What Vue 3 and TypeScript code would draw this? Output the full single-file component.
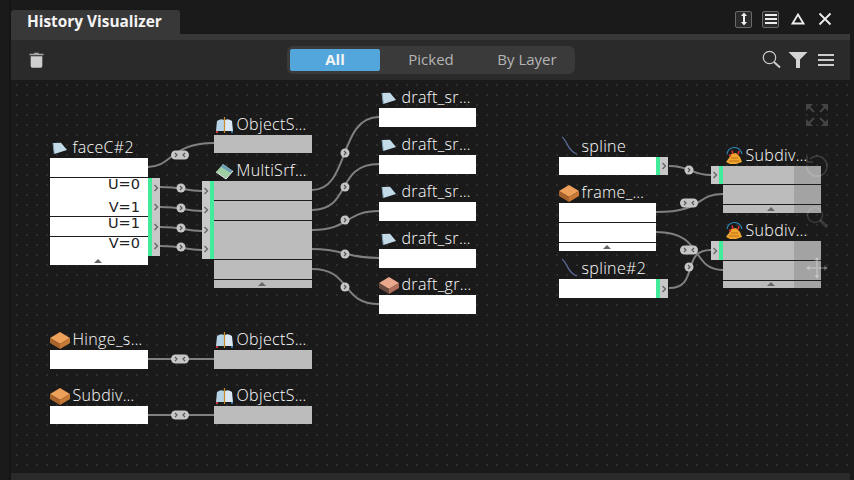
<script setup lang="ts">
interface GraphNode {
  id: string; title: string; icon: string; x: number; y: number; w: number; h: number;
  body: 'white' | 'gray' | 'split'; rows: number[]; tri?: boolean;
  outPort?: [number, number, number]; inPort?: [number, number, number];
}
// rows = separator offsets from the top of the body; ports = [top, height, count]
const nodes: GraphNode[] = [
  { id: 'a', title: 'faceC#2', icon: 'face', x: 50, y: 158, w: 98, h: 107, body: 'white', rows: [19, 58, 78], tri: true, outPort: [20, 78, 4] },
  { id: 'b', title: 'ObjectS…', icon: 'obj', x: 214, y: 135, w: 98, h: 18, body: 'gray', rows: [] },
  { id: 'c', title: 'MultiSrf…', icon: 'multi', x: 214, y: 181, w: 98, h: 107, body: 'gray', rows: [19, 39, 78, 98], tri: true, inPort: [0, 78, 4] },
  { id: 'd1', title: 'draft_sr…', icon: 'face', x: 379, y: 108, w: 97, h: 19, body: 'white', rows: [] },
  { id: 'd2', title: 'draft_sr…', icon: 'face', x: 379, y: 155, w: 97, h: 19, body: 'white', rows: [] },
  { id: 'd3', title: 'draft_sr…', icon: 'face', x: 379, y: 202, w: 97, h: 19, body: 'white', rows: [] },
  { id: 'd4', title: 'draft_sr…', icon: 'face', x: 379, y: 249, w: 97, h: 19, body: 'white', rows: [] },
  { id: 'd5', title: 'draft_gr…', icon: 'pink', x: 379, y: 295, w: 97, h: 19, body: 'white', rows: [] },
  { id: 'e', title: 'spline', icon: 'curve', x: 559, y: 157, w: 97, h: 18, body: 'white', rows: [], outPort: [0, 18, 1] },
  { id: 'f', title: 'frame_…', icon: 'cube', x: 559, y: 203, w: 97, h: 48, body: 'white', rows: [19, 39], tri: true },
  { id: 'g', title: 'spline#2', icon: 'curve', x: 559, y: 279, w: 97, h: 19, body: 'white', rows: [], outPort: [0, 19, 1] },
  { id: 'h', title: 'Subdiv…', icon: 'sub', x: 723, y: 166, w: 98, h: 47, body: 'split', rows: [18, 38], tri: true, inPort: [0, 18, 1] },
  { id: 'i', title: 'Subdiv…', icon: 'sub', x: 723, y: 241, w: 98, h: 47, body: 'split', rows: [19, 39], tri: true, inPort: [0, 19, 1] },
  { id: 'j', title: 'Hinge_s…', icon: 'cube', x: 50, y: 350, w: 98, h: 19, body: 'white', rows: [] },
  { id: 'k', title: 'ObjectS…', icon: 'obj', x: 214, y: 350, w: 98, h: 19, body: 'gray', rows: [] },
  { id: 'l', title: 'Subdiv…', icon: 'cube', x: 50, y: 406, w: 98, h: 18, body: 'white', rows: [] },
  { id: 'm', title: 'ObjectS…', icon: 'obj', x: 214, y: 406, w: 98, h: 18, body: 'gray', rows: [] },
]

const rowLabels = [
  { t: 'U=0', y: 184 }, { t: 'V=1', y: 207 }, { t: 'U=1', y: 223 }, { t: 'V=0', y: 243 },
]
const wires = [
  'M148 167C172 167 170 143 214 143',
  'M160 187C184 187 184 191 202 191', 'M160 207C184 207 184 211 202 211',
  'M160 227C184 227 184 231 202 231', 'M160 246C184 246 184 250 202 250',
  'M312 190C350 190 338 117 379 117', 'M312 210C352 210 335 164 379 164',
  'M312 230C350 230 345 211 379 211', 'M312 249C345 249 345 258 379 258',
  'M312 269C352 269 340 304 379 304',
  'M669 166C692 166 690 175 711 175', 'M656 212C705 212 695 194 723 194',
  'M656 232C705 232 690 270 723 270', 'M669 288C700 288 680 250 711 250',
  'M148 359L214 359', 'M148 415L214 415',
]
const singles = [
  [181, 188], [181, 208], [181, 228], [181, 247],
  [345, 153], [345, 187], [345, 220], [345, 254], [345, 287],
  [689, 170], [689, 267],
]
const doubles = [[180, 155], [689, 203], [689, 250], [180, 359], [180, 415]]
</script>

<template>
  <div class="app">
    <div class="panel">
      <header class="titlebar">
        <div class="tab">History Visualizer</div>
        <div class="win-actions">
          <button class="win-btn boxed" aria-label="Fit">
            <svg width="12" height="14" viewBox="0 0 12 14"><path d="M6 0.5 9 4H7V10H9L6 13.5 3 10H5V4H3Z" fill="#eee"/></svg>
          </button>
          <button class="win-btn boxed" aria-label="List">
            <svg width="14" height="12" viewBox="0 0 14 12"><path d="M1 2H13M1 6H13M1 10H13" stroke="#eee" stroke-width="2"/></svg>
          </button>
          <button class="win-btn" aria-label="Collapse">
            <svg width="14" height="12" viewBox="0 0 14 12"><path d="M7 1.5 12.5 10.5H1.5Z" fill="none" stroke="#eee" stroke-width="1.8"/></svg>
          </button>
          <button class="win-btn" aria-label="Close">
            <svg width="14" height="14" viewBox="0 0 14 14"><path d="M1.5 1.5 12.5 12.5M12.5 1.5 1.5 12.5" stroke="#eee" stroke-width="1.8"/></svg>
          </button>
        </div>
      </header>
      <div class="strip"></div>
      <div class="toolbar">
        <svg class="trash" width="15" height="18" viewBox="0 0 16 18">
          <path d="M5.5 2.2V1.2H10.5V2.2H15.5V4H.5V2.2Z" fill="#a8a8a8"/>
          <path d="M1.8 5H14.2V15.5Q14.2 17.2 12.5 17.2H3.5Q1.8 17.2 1.8 15.5Z" fill="#cfcfcf"/>
        </svg>
        <div class="segments">
          <span class="seg active">All</span>
          <span class="seg">Picked</span>
          <span class="seg">By Layer</span>
        </div>
        <div class="tools">
          <svg width="20" height="20" viewBox="0 0 20 20"><circle cx="7.5" cy="7.5" r="6.2" fill="none" stroke="#ccc" stroke-width="1.2"/><path d="M12 12 18 17.5" stroke="#ccc" stroke-width="2"/></svg>
          <svg class="funnel" width="20" height="18" viewBox="0 0 20 18"><path d="M0.5 1H19.5L12 8.5V17H8V8.5Z" fill="#d4d4d4"/></svg>
          <svg width="16" height="14" viewBox="0 0 16 14"><path d="M0 2H16M0 7H16M0 12H16" stroke="#ccc" stroke-width="2"/></svg>
        </div>
      </div>
      <main class="canvas">
        <svg class="wires" width="854" height="480" viewBox="0 0 854 480">
          <path v-for="(d, i) in wires" :key="i" :d="d" fill="none" stroke="#808080" stroke-width="2"/>
          <g v-for="(p, i) in singles" :key="'s' + i" :transform="`translate(${p[0]} ${p[1]})`">
            <circle r="4.5" fill="#c6c6c6"/>
            <path d="M-1 -2 1 0 -1 2" fill="none" stroke="#555" stroke-width="1.2"/>
          </g>
          <g v-for="(p, i) in doubles" :key="'d' + i" :transform="`translate(${p[0]} ${p[1]})`">
            <rect x="-9" y="-4.5" width="18" height="9" rx="4.5" fill="#c6c6c6"/>
            <path d="M-5 -2 -3 0 -5 2M5 -2 3 0 5 2" fill="none" stroke="#555" stroke-width="1.2"/>
          </g>
        </svg>

        <article v-for="n in nodes" :key="n.id" class="node" :style="{ left: n.x - 11 + 'px', top: n.y - 80 + 'px', width: n.w + 'px', height: n.h + 'px' }">
          <div class="node-title">
            <svg class="icon" width="22" height="22" viewBox="0 0 22 22">
              <template v-if="n.icon === 'face'">
                <path d="M3 7 11 6.700 17 14 4.300 18Z" fill="#c3dbe9"/><path d="M3 7 4.300 18" stroke="#7fa0b6" stroke-width="1"/>
              </template>
              <template v-else-if="n.icon === 'obj'">
                <path d="M3 8Q7 5 10 7V18H2Z" fill="#b5d2e6"/><path d="M11 7Q14 5 18 8L19 18H11Z" fill="#d9e8f2"/>
                <path d="M10.5 4V20" stroke="#c98a2c" stroke-width="1.2"/>
                <rect x="2" y="18" width="2" height="2" fill="#c33"/><rect x="17" y="18" width="2" height="2" fill="#37a"/>
              </template>
              <template v-else-if="n.icon === 'multi'">
                <path d="M2 13 9 5 19 12 12 20Z" fill="#9fcfa4"/><path d="M9 5 19 12 17 14 7 8Z" fill="#6fa0b8"/><path d="M2 13 12 20 19 12" fill="none" stroke="#e8e8e8"/>
              </template>
              <template v-else-if="n.icon === 'cube' || n.icon === 'pink'">
                <path d="M0 10 10 4 20 10 10 16Z" :fill="n.icon === 'cube' ? '#eda05a' : '#eaa88c'"/>
                <path d="M0 10 10 16V21L0 15Z" :fill="n.icon === 'cube' ? '#a8632a' : '#6b4a40'"/>
                <path d="M10 16 20 10V15L10 21Z" :fill="n.icon === 'cube' ? '#c67a35' : '#b0705c'"/>
              </template>
              <template v-else-if="n.icon === 'curve'">
                <path d="M3 2C8 5 9 17 18 19" fill="none" stroke="#5a6b96" stroke-width="1.2"/>
              </template>
              <template v-else>
                <path d="M8 10 13 9 17 13 19 18 13 20 7 20 3 18 6 14Z" fill="#f0a52e"/><path d="M6 17H16M8 14H15" stroke="#bd6f12" stroke-width="1"/>
                <path d="M4 10Q5 4 11 3.500T19 10" fill="none" stroke="#2e8fc0" stroke-width="1.1"/>
                <path d="M9 6.500 10 10M16 7 15 10.500M6 11 8 12" stroke="#d33" stroke-width="1.6"/>
              </template>
            </svg>
            <span class="label">{{ n.title }}</span>
          </div>
          <div class="body" :class="n.body">
            <i v-if="n.body === 'split'" class="shade"></i>
            <i v-for="r in n.rows" :key="r" class="sep" :style="{ top: r + 'px' }"></i>
            <i v-if="n.tri" class="tri"></i>
          </div>
          <div v-if="n.outPort" class="port out" :style="{ top: n.outPort[0] + 'px', height: n.outPort[1] + 'px' }">
            <svg v-for="k in n.outPort[2]" :key="k" width="8" height="8" viewBox="0 0 8 8"><path d="M2.5 1 5.5 4 2.5 7" fill="none" stroke="#666" stroke-width="1.4"/></svg>
          </div>
          <div v-if="n.inPort" class="port in" :style="{ top: n.inPort[0] + 'px', height: n.inPort[1] + 'px' }">
            <svg v-for="k in n.inPort[2]" :key="k" width="8" height="8" viewBox="0 0 8 8"><path d="M2.5 1 5.5 4 2.5 7" fill="none" stroke="#666" stroke-width="1.4"/></svg>
          </div>
        </article>
        <span v-for="l in rowLabels" :key="l.t + l.y" class="row-label" :style="{ top: l.y - 80 - 7 + 'px' }">{{ l.t }}</span>

        <div class="overlay-icons">
          <svg width="24" height="24" viewBox="0 0 24 24"><path d="M1 1H8L1 8ZM23 1H16L23 8ZM1 23H8L1 16ZM23 23H16L23 16Z" fill="#454545"/><path d="M3 3 9 9M21 3 15 9M3 21 9 15M21 21 15 15" stroke="#454545" stroke-width="2"/></svg>
          <svg width="24" height="24" viewBox="0 0 24 24"><path d="M5 5A10 10 0 1 1 2 13" fill="none" stroke="#fff" stroke-opacity=".16" stroke-width="1.6"/><path d="M2 2V8H8" fill="none" stroke="#fff" stroke-opacity=".16" stroke-width="1.6"/></svg>
          <svg width="24" height="24" viewBox="0 0 24 24"><circle cx="10" cy="10" r="7.5" fill="none" stroke="#fff" stroke-opacity=".14" stroke-width="1.6"/><path d="M15 15 22 22" stroke="#fff" stroke-opacity=".14" stroke-width="3"/></svg>
          <svg width="24" height="24" viewBox="0 0 24 24"><path d="M12 2V22M2 12H22" stroke="#fff" stroke-opacity=".22" stroke-width="2"/><path d="M12 1 15 5H9ZM12 23 15 19H9ZM1 12 5 9V15ZM23 12 19 9V15Z" fill="#fff" fill-opacity=".22"/></svg>
        </div>
      </main>
      <div class="bottom"></div>
    </div>
  </div>
</template>

<style>
html, body { margin: 0; background: #1a1a1a; }
</style>

<style scoped>
.app {
  width: 854px; height: 480px; overflow: hidden; box-sizing: border-box;
  padding: 0 4px 0 9px; background: #1a1a1a; display: flex;
  font-family: "Open Sans", "Noto Sans", sans-serif;
}
.panel { flex: 1; min-width: 0; display: flex; flex-direction: column; border-left: 2px solid #151515; }
.titlebar { height: 34px; flex: none; display: flex; align-items: flex-end; justify-content: space-between; padding-right: 17px; }
.tab {
  width: 169px; height: 24px; box-sizing: border-box; padding: 0 0 0 16px; background: #383838; border-radius: 3px 3px 0 0;
  color: #f4f4f4; font-weight: 700; font-size: 15.4px; line-height: 24px; white-space: nowrap;
}
.win-actions { display: flex; gap: 10px; align-items: center; height: 18px; margin-bottom: 6px; }
.win-btn { width: 17px; height: 17px; padding: 0; background: none; border: 0; display: flex; align-items: center; justify-content: center; }
.win-btn.boxed { border: 1px solid #6a6a6a; border-radius: 2px; background: #2a2a2a; box-sizing: content-box; width: 15px; height: 15px; }
.strip { height: 6px; background: #383838; flex: none; }
.toolbar { height: 40px; flex: none; background: #2a2a2a; display: flex; align-items: center; position: relative; padding: 0 16px 0 18px; justify-content: space-between; }
.segments {
  position: absolute; left: 276px; top: 6px; width: 288px; height: 28px;
  background: #3a3a3a; border-radius: 6px; display: flex;
}
.seg { flex: 1; margin: 3px; line-height: 21px; text-align: center; color: #b4b4b4; font-size: 15px; border-radius: 2px; }
.seg.active { background: #52a6dc; color: #f4f4f4; font-weight: 700; }
.tools { display: flex; align-items: center; gap: 10px; }
.funnel { margin-left: -4px; }
.canvas {
  flex: 1; position: relative;
  background-color: #1a1a1a;
  background-image: radial-gradient(circle at center, #2d2d2d 0, #2d2d2d 1px, transparent 1.1px);
  background-size: 10px 10px; background-position: 1px 0;
}
.wires { position: absolute; left: -11px; top: -80px; pointer-events: none; }
.overlay-icons { position: absolute; left: 794px; top: 23px; display: flex; flex-direction: column; gap: 27px; pointer-events: none; }
.node { position: absolute; }
.node-title { position: absolute; left: 0; bottom: 100%; height: 23px; width: 110px; display: flex; align-items: center; }
.icon { flex: none; margin-right: 0.5px; }
.label { color: #fff; font-size: 16px; font-weight: 300; letter-spacing: .35px; white-space: nowrap; line-height: 23px; position: relative; top: 1px; }
.body { position: absolute; inset: 0; }
.body.white { background: #fff; }
.body.gray, .body.split { background: #bcbcbc; }
.shade { position: absolute; top: 0; right: 0; bottom: 0; width: 27px; background: #a3a3a3; }
.sep { position: absolute; left: 0; right: 0; height: 1px; background: #1c1c1c; }
.tri { position: absolute; left: 44px; bottom: 2px; border: 4px solid transparent; border-top: 0; border-bottom: 4px solid #666; }
.port { position: absolute; width: 12px; box-sizing: border-box; background: #c8c8c8; display: flex; flex-direction: column; justify-content: space-around; }
.port.out { left: 100%; border-left: 4px solid #40ec9a; }
.port.in { right: 100%; border-right: 4px solid #40ec9a; }
.row-label { position: absolute; left: 39px; width: 90px; text-align: right; color: #222; font-family: "DejaVu Sans", sans-serif; font-size: 14.5px; line-height: 14px; }
.bottom { height: 7px; flex: none; background: #2a2a2a; }
</style>
